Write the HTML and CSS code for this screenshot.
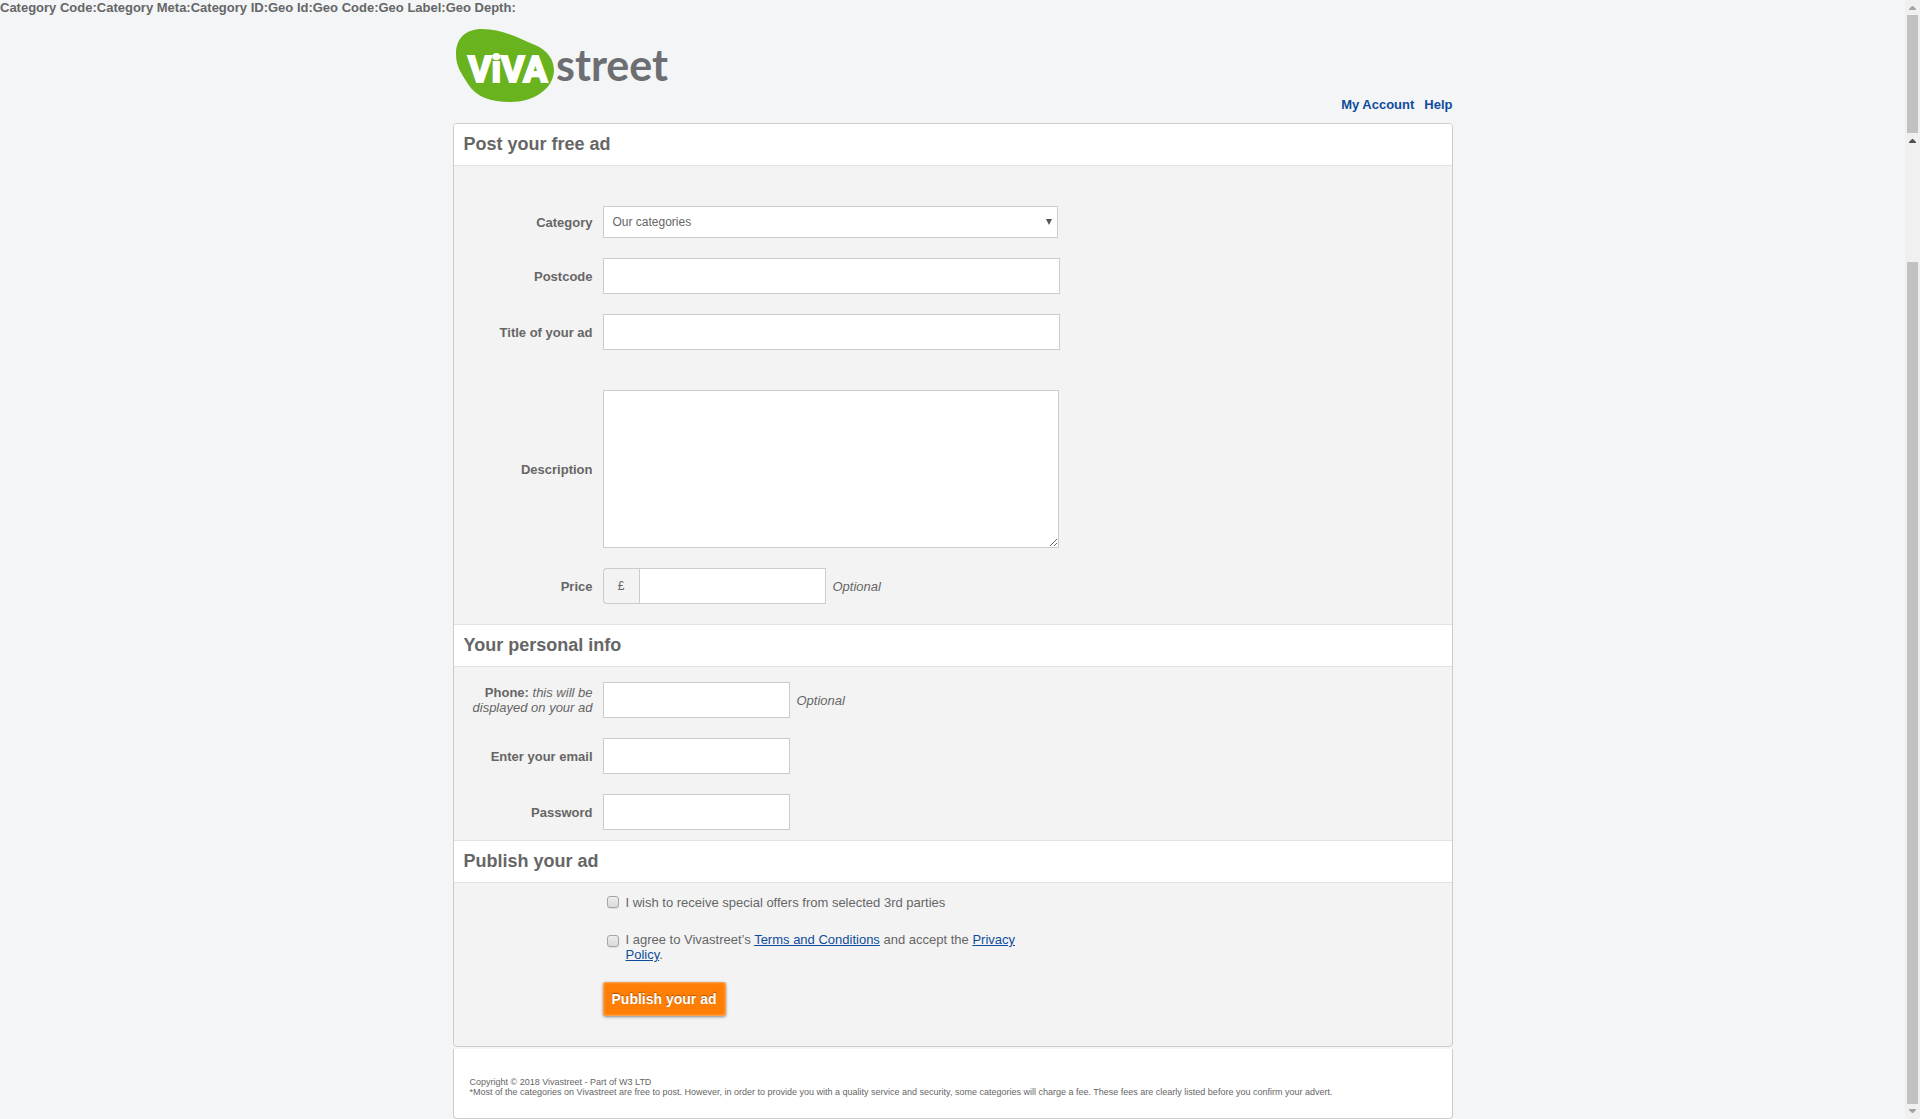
FILE: index.html
```html
<!DOCTYPE html>
<html lang="en">
<head>
<meta charset="utf-8">
<title>Post your free ad - Vivastreet</title>
<link rel="stylesheet" href="styles.css">
</head>
<body>
<div class="layout">
  <div class="page">
    <div class="meta-line">Category Code:Category Meta:Category ID:Geo Id:Geo Code:Geo Label:Geo Depth:</div>
    <div class="container">
      <header class="header">
        <a class="logo" href="#" aria-label="Vivastreet">
          <svg width="216" height="76" viewBox="0 0 216 76">
            <path fill="#68b31e" d="M3 26C3 10 13 1 29 1C49 1 66 10 82 17C94 22 101 31 101 43C100 61 81 74 57 74C38 74 23 69 15 56C8 45 3 38 3 26Z"/>
            <text class="logo-viva" x="15" y="54">ViVA</text>
            <text class="logo-street" x="103" y="53">street</text>
          </svg>
        </a>
        <nav class="links">
          <a href="#">My Account</a>
          <a href="#">Help</a>
        </nav>
      </header>

      <form class="panel">
        <h2 class="heading">Post your free ad</h2>
        <section class="fields fields-ad">
          <div class="row">
            <label class="label" for="category">Category</label>
            <div class="select-box">
              <select class="select" id="category"><option>Our categories</option></select>
              <svg class="caret" width="6" height="6" viewBox="0 0 6 6"><path fill="#555" d="M0 0H6L3 6Z"/></svg>
            </div>
          </div>
          <div class="row">
            <label class="label" for="postcode">Postcode</label>
            <input class="input wide" id="postcode" type="text">
          </div>
          <div class="row">
            <label class="label" for="title">Title of your ad</label>
            <input class="input wide" id="title" type="text">
          </div>
          <div class="row row-description">
            <label class="label" for="description">Description</label>
            <textarea class="textarea" id="description"></textarea>
          </div>
          <div class="row">
            <label class="label" for="price">Price</label>
            <div class="price"><span class="currency">£</span><input class="input" id="price" type="text"></div>
            <em class="hint">Optional</em>
          </div>
        </section>

        <h2 class="heading">Your personal info</h2>
        <section class="fields fields-personal">
          <div class="row">
            <label class="label" for="phone">Phone: <em class="note">this will be displayed on your ad</em></label>
            <input class="input" id="phone" type="tel">
            <em class="hint">Optional</em>
          </div>
          <div class="row">
            <label class="label" for="email">Enter your email</label>
            <input class="input" id="email" type="email">
          </div>
          <div class="row">
            <label class="label" for="password">Password</label>
            <input class="input" id="password" type="password">
          </div>
        </section>

        <h2 class="heading">Publish your ad</h2>
        <section class="publish">
          <div class="check">
            <input class="checkbox" id="offers" type="checkbox">
            <label for="offers">I wish to receive special offers from selected 3rd parties</label>
          </div>
          <div class="check check-terms">
            <input class="checkbox" id="terms" type="checkbox">
            <label for="terms">I agree to Vivastreet’s <a href="#">Terms and Conditions</a> and accept the <a href="#">Privacy Policy</a>.</label>
          </div>
          <button class="button" type="submit">Publish your ad</button>
        </section>
      </form>

      <footer class="footer">
        <p>Copyright © 2018 Vivastreet - Part of W3 LTD</p>
        <p>*Most of the categories on Vivastreet are free to post. However, in order to provide you with a quality service and security, some categories will charge a fee. These fees are clearly listed before you confirm your advert.</p>
      </footer>
    </div>
  </div>

  <div class="scrollbar" aria-hidden="true">
    <svg class="arrow" width="15" height="15" viewBox="0 0 15 15"><path fill="#a3a3a3" d="M4 10V9L7 6H8L11 9V10Z"/></svg>
    <div class="thumb thumb-short"></div>
    <svg class="arrow" width="15" height="15" viewBox="0 0 15 15"><path fill="#505050" d="M4 10V9L7 6H8L11 9V10Z"/></svg>
    <div class="thumb thumb-long"></div>
    <svg class="arrow" width="15" height="15" viewBox="0 0 15 15"><path fill="#a3a3a3" d="M4 5V6L7 9H8L11 6V5Z"/></svg>
  </div>
</div>
</body>
</html>
```

FILE: styles.css
```css
* { box-sizing: border-box; }

body {
  margin: 0;
  background: #f3f5f7;
  color: #666;
  font: 13px/15px "Liberation Sans", Arial, sans-serif;
}

a { color: #0f4c9b; }

.layout {
  display: flex;
  min-height: 100vh;
}

.page {
  flex: 1;
  min-width: 0;
}

.meta-line { font-weight: bold; }

.container {
  max-width: 1000px;
  margin: 0 auto;
}

.header {
  display: flex;
  justify-content: space-between;
  align-items: flex-end;
  height: 108px;
  padding-bottom: 11px;
}

.logo {
  align-self: flex-start;
  padding-top: 13px;
}

.logo svg { display: block; }

.logo-viva {
  fill: #fff;
  stroke: #fff;
  stroke-width: 2px;
  font: bold 36px Roboto, "Liberation Sans", sans-serif;
}

.logo-street {
  fill: #6d6e71;
  font: bold 43px Lato, "Liberation Sans", sans-serif;
}

.links {
  display: flex;
  gap: 10px;
  font-weight: bold;
}

.links a { text-decoration: none; }

.panel {
  border: 1px solid #ccc;
  border-radius: 4px;
  background: #f3f3f3;
  overflow: hidden;
}

.heading {
  margin: 0;
  padding: 10px 10px 11px;
  border: solid #e2e2e2;
  border-width: 1px 0;
  background: #fff;
  font-size: 18px;
  line-height: 20px;
}

.heading:first-child { border-top: 0; }

.fields {
  display: flex;
  flex-direction: column;
  gap: 20px;
}

.fields-ad { padding: 40px 0 20px; }
.fields-personal { padding: 15px 0 10px; }

.row {
  display: flex;
  align-items: center;
}

.row-description { margin-top: 20px; }

.label {
  width: 149px;
  padding: 0 10px 0 13px;
  font-weight: bold;
  text-align: right;
}

.note { font-weight: normal; }

.input,
.select,
.textarea {
  display: block;
  border: 1px solid #ccc;
  border-radius: 0;
  background: #fff;
  color: #666;
  font: 12px "Liberation Sans", Arial, sans-serif;
}

.input {
  width: 187px;
  height: 36px;
  padding: 0 9px;
}

.wide { width: 457px; }

.select-box { position: relative; }

.select {
  appearance: none;
  width: 455px;
  height: 32px;
  padding: 0 9px;
}

.caret {
  position: absolute;
  top: 13px;
  right: 6px;
  pointer-events: none;
}

.textarea {
  width: 456px;
  height: 158px;
  padding: 9px;
}

.price { display: flex; }

.currency {
  width: 36px;
  border: 1px solid #ccc;
  border-right: 0;
  border-radius: 4px 0 0 4px;
  font-size: 12px;
  line-height: 34px;
  text-align: center;
}

.hint { margin-left: 7px; }

.publish { padding: 12px 0 30px 149px; }

.check {
  display: flex;
  align-items: flex-start;
  gap: 7px;
  max-width: 447px;
  padding-left: 4px;
}

.check-terms { margin: 22px 0 20px; }

.checkbox {
  appearance: none;
  flex: none;
  width: 12px;
  height: 12px;
  margin: 1px 0 0;
  border: 1px solid #a6a6a6;
  border-radius: 3px;
  background: linear-gradient(#ededed, #dadada);
  box-shadow: 0 1px 1px #ddd;
}

.check-terms .checkbox { margin-top: 3px; }

.button {
  display: block;
  height: 34px;
  padding: 0 9px;
  border: 0;
  border-radius: 3px;
  background: #ff7f05;
  box-shadow: inset 0 0 2px 1px #ffa95c, 0 1px 3px #888;
  color: #fff;
  font: bold 14px "Liberation Sans", Arial, sans-serif;
  text-shadow: 0 -1px 1px #a65000;
}

.footer {
  margin-top: 2px;
  padding: 28px 16px 21px;
  border: 1px solid #ccc;
  border-top: 0;
  border-radius: 0 0 4px 4px;
  background: #fff;
  font-size: 9px;
  line-height: 10px;
}

.footer p { margin: 0; }

.scrollbar {
  display: flex;
  flex-direction: column;
  width: 15px;
  background: #f0f0f0;
}

.arrow {
  display: block;
  flex: none;
}

.thumb {
  margin: 0 2px;
  background: #c1c1c1;
}

.thumb-short { height: 118px; }

.thumb-long {
  flex: 1;
  margin-top: 114px;
}
```
